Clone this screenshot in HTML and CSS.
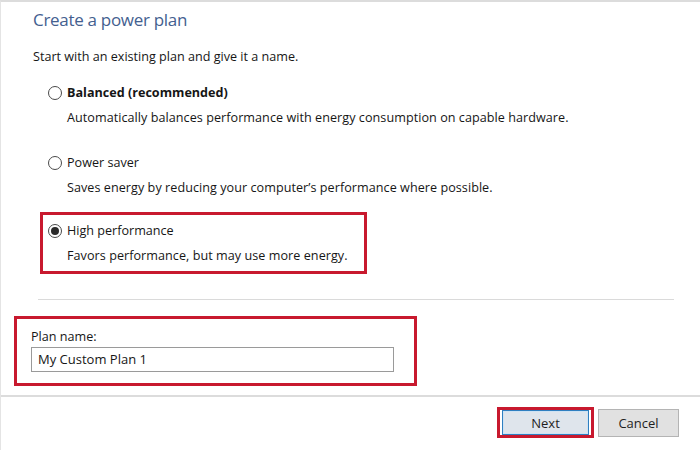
FILE: index.html
```html
<!DOCTYPE html>
<html lang="en">
<head>
<meta charset="utf-8">
<title>Create a power plan</title>
<link rel="stylesheet" href="styles.css">
</head>
<body>
<div class="frame">
  <div class="content">
    <h1 class="title">Create a power plan</h1>
    <p class="intro">Start with an existing plan and give it a name.</p>
    <div class="options">
      <div class="option">
        <div class="opt-row"><span class="radio"></span><span class="opt-label bold">Balanced (recommended)</span></div>
        <div class="opt-desc">Automatically balances performance with energy consumption on capable hardware.</div>
      </div>
      <div class="option second">
        <div class="opt-row"><span class="radio"></span><span class="opt-label">Power saver</span></div>
        <div class="opt-desc">Saves energy by reducing your computer’s performance where possible.</div>
      </div>
      <div class="option highlight">
        <div class="opt-row"><span class="radio checked"></span><span class="opt-label">High performance</span></div>
        <div class="opt-desc">Favors performance, but may use more energy.</div>
      </div>
    </div>
    <div class="sep"></div>
  </div>
  <div class="name-box">
    <div class="name-label">Plan name:</div>
    <div class="name-input">My Custom Plan 1</div>
  </div>
  <div class="sep-full"></div>
  <div class="footer">
    <div class="next-wrap"><button class="btn next">Next</button></div>
    <button class="btn cancel">Cancel</button>
  </div>
</div>
</body>
</html>
```

FILE: styles.css
```css
html, body {
  margin: 0;
  padding: 0;
  background: #ffffff;
}
body {
  width: 700px;
  height: 450px;
  overflow: hidden;
  font-family: "Open Sans", "Noto Sans", "Liberation Sans", sans-serif;
  font-size: 12.6px;
  color: #161616;
}
.frame {
  box-sizing: border-box;
  width: 700px;
  height: 450px;
  border-top: 2px solid #dcdcdc;
  border-left: 1px solid #e4e4e4;
}
.content {
  padding-left: 32px;
}
.title {
  margin: 5px 0 0 0;
  font-size: 17px;
  font-weight: 400;
  line-height: 26px;
  color: #44608f;
  letter-spacing: -0.3px;
}
.intro {
  margin: 14px 0 0 0;
  line-height: 20px;
}
.options {
  margin: 13px 0 0 7px;
}
.option {
  padding-left: 8px;
}
.option.second {
  margin-top: 20px;
}
.opt-row {
  display: flex;
  align-items: center;
  height: 25px;
}
.radio {
  box-sizing: border-box;
  width: 14px;
  height: 14px;
  border: 1px solid #4a4a4a;
  border-radius: 50%;
  background: #fff;
  margin-right: 5px;
  display: flex;
  align-items: center;
  justify-content: center;
}
.radio.checked::after {
  content: "";
  width: 8px;
  height: 8px;
  border-radius: 50%;
  background: #2a2a2a;
}
.bold {
  font-weight: 700;
}
.opt-desc {
  height: 25px;
  line-height: 25px;
  padding-left: 19px;
  letter-spacing: 0.05px;
}
.option.highlight {
  box-sizing: border-box;
  width: 327px;
  margin-top: 12px;
  border: 3px solid #c8192e;
  padding: 3px 0 3px 5px;
}
.sep {
  margin: 25px 0 0 5px;
  width: 636px;
  height: 1px;
  background: #dadada;
}
.name-box {
  box-sizing: border-box;
  width: 403px;
  margin: 16px 0 0 13px;
  border: 3px solid #c8192e;
  padding: 10px 0 11px 14px;
}
.name-label {
  line-height: 16px;
}
.name-input {
  box-sizing: border-box;
  margin-top: 2px;
  width: 363px;
  height: 25px;
  border: 1px solid #9a9a9a;
  line-height: 23px;
  padding-left: 6px;
  font-size: 13px;
}
.sep-full {
  margin-top: 9px;
  height: 2px;
  background: #dcdcdc;
}
.footer {
  display: flex;
  justify-content: flex-end;
  align-items: center;
  gap: 4px;
  padding: 10px 21px 0 0;
}
.next-wrap {
  border: 3px solid #c8192e;
  padding: 0 2px;
  height: 25px;
}
.btn {
  box-sizing: border-box;
  font-family: inherit;
  font-size: 13px;
  color: #1e1e1e;
  margin: 0;
}
.next {
  width: 87px;
  height: 25px;
  background: #dfe5ec;
  border: 1px solid #2f7fc0;
  box-shadow: inset 0 0 0 1px #cfe3f4;
}
.cancel {
  width: 81px;
  height: 28px;
  background: #e1e1e1;
  border: 1px solid #b4b4b4;
}
```
